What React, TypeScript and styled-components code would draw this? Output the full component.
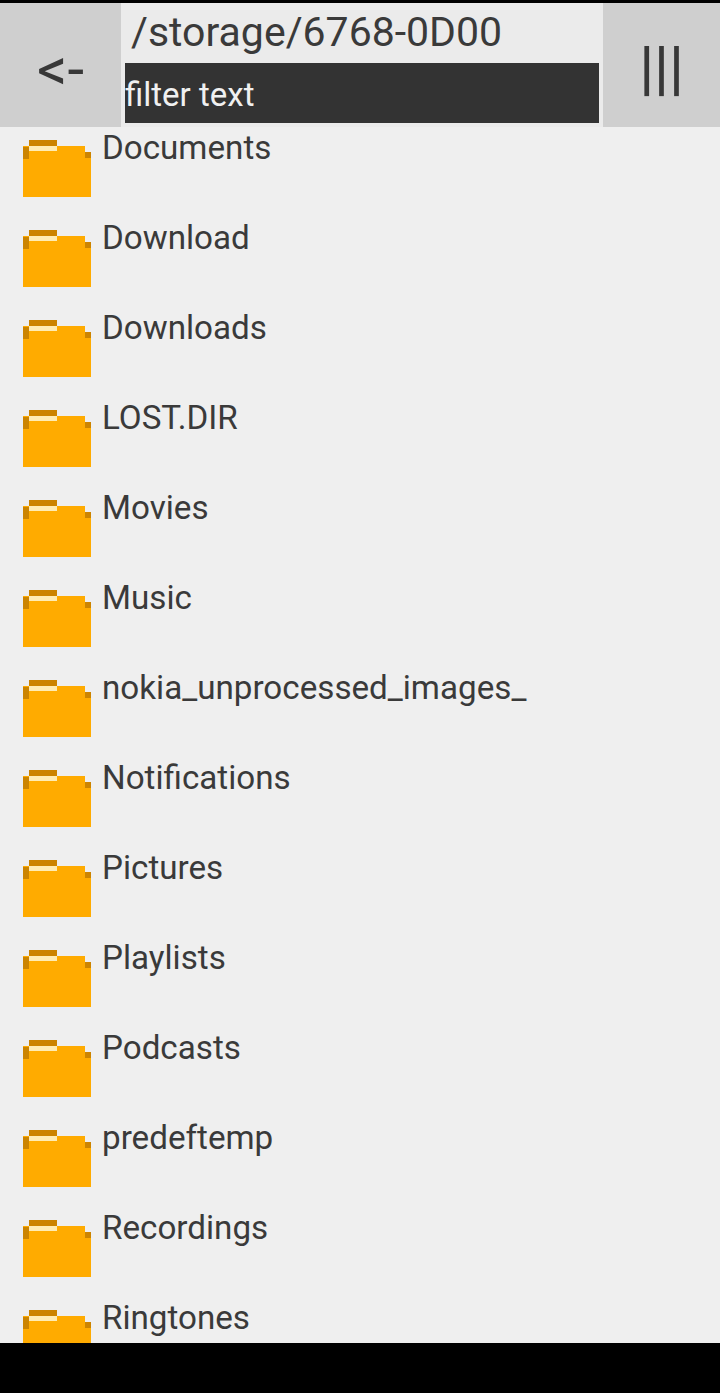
import styled, { createGlobalStyle } from "styled-components";

const folders = [
  "Documents",
  "Download",
  "Downloads",
  "LOST.DIR",
  "Movies",
  "Music",
  "nokia_unprocessed_images_",
  "Notifications",
  "Pictures",
  "Playlists",
  "Podcasts",
  "predeftemp",
  "Recordings",
  "Ringtones",
];

function FolderIcon() {
  return (
    <FolderSvg viewBox="0 0 68 57" shapeRendering="crispEdges">
      <path fill="#ffab00" d="M6 6h56v6h6v45H0V6h6z" />
      <path fill="#cc8400" d="M6 0h28v6H6zM0 7h6v12H0zM62 12h6v6h-6z" />
      <path fill="#ffecb3" d="M6 6h28v5H6z" />
    </FolderSvg>
  );
}

export default function App() {
  return (
    <>
      <GlobalStyle />
      <Screen>
        <Header>
          <BackButton>&lt;-</BackButton>
          <PathPanel>
            <PathLabel>/storage/6768-0D00</PathLabel>
            <FilterBox>filter text</FilterBox>
          </PathPanel>
          <MenuButton>|||</MenuButton>
        </Header>
        <FolderList>
          {folders.map((name) => (
            <FolderRow key={name}>
              <FolderIcon />
              <FolderName>{name}</FolderName>
            </FolderRow>
          ))}
        </FolderList>
      </Screen>
    </>
  );
}

const GlobalStyle = createGlobalStyle`
  html, body {
    margin: 0;
    padding: 0;
    background: #000;
  }
`;

const Screen = styled.div`
  width: 720px;
  height: 1393px;
  padding: 3px 0 50px;
  box-sizing: border-box;
  display: flex;
  flex-direction: column;
  background: #000;
  font-family: Roboto, "Liberation Sans", sans-serif;
  overflow: hidden;
`;

const Header = styled.div`
  display: flex;
  height: 124px;
  flex-shrink: 0;
  background: #ebebeb;
`;

const BackButton = styled.div`
  width: 121px;
  flex-shrink: 0;
  display: flex;
  align-items: center;
  justify-content: center;
  box-sizing: border-box;
  padding-top: 8px;
  background: #cfcfcf;
  color: #383838;
  font-size: 60px;
`;

const MenuButton = styled.div`
  width: 117px;
  flex-shrink: 0;
  display: flex;
  align-items: center;
  justify-content: center;
  box-sizing: border-box;
  padding-top: 4px;
  background: #cfcfcf;
  color: #383838;
  font-size: 60px;
  font-weight: 500;
`;

const PathPanel = styled.div`
  flex: 1;
  display: flex;
  flex-direction: column;
  padding: 0 4px 4px;
`;

const PathLabel = styled.div`
  height: 60px;
  line-height: 59px;
  padding-left: 6px;
  font-size: 41px;
  color: #3a3a3a;
`;

const FilterBox = styled.div`
  height: 60px;
  line-height: 63px;
  background: #333;
  color: #f0f0f0;
  font-size: 33px;
`;

const FolderList = styled.div`
  flex: 1;
  min-height: 0;
  overflow: hidden;
  background: #efefef;
`;

const FolderRow = styled.div`
  height: 90px;
  display: flex;
  align-items: flex-start;
  gap: 11px;
  padding-left: 23px;
`;

const FolderSvg = styled.svg`
  width: 68px;
  height: 57px;
  margin-top: 13px;
  flex-shrink: 0;
`;

const FolderName = styled.div`
  font-size: 33.2px;
  line-height: 42px;
  color: #3a3a3a;
`;
